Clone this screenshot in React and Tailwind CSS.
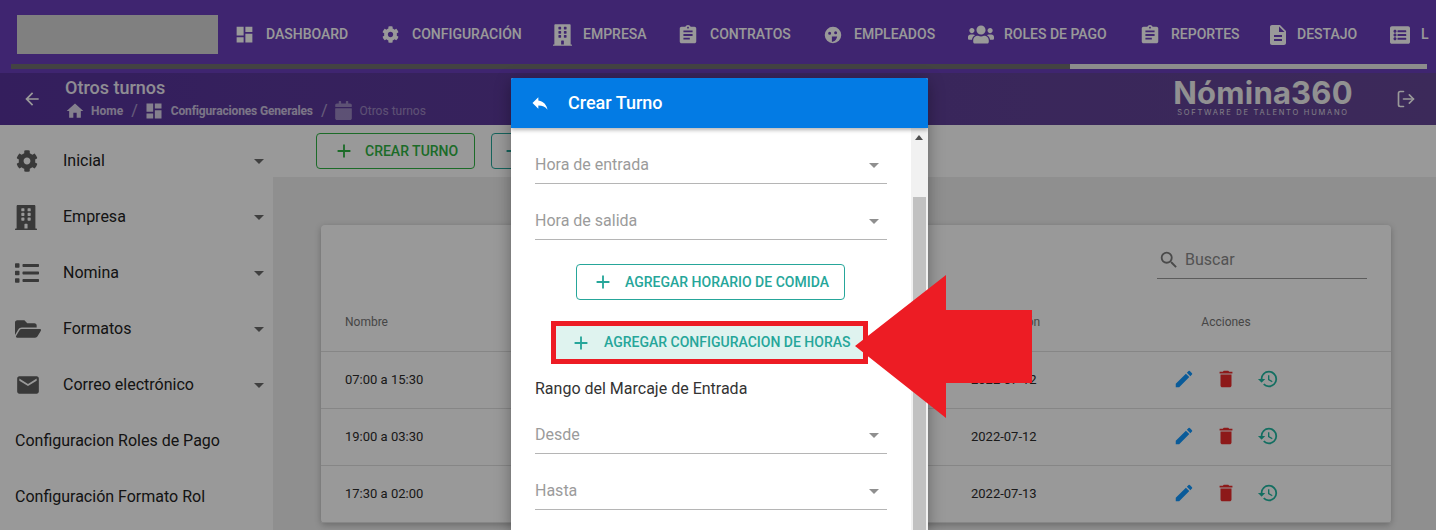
import {
  MdAdd,
  MdArrowBack,
  MdArrowDropDown,
  MdAssignment,
  MdDashboard,
  MdDelete,
  MdDescription,
  MdEdit,
  MdEmail,
  MdHistory,
  MdHome,
  MdReply,
  MdSearch,
} from "react-icons/md";
import {
  FaBuilding,
  FaCalendar,
  FaCog,
  FaFolderOpen,
  FaList,
  FaListAlt,
  FaUsers,
} from "react-icons/fa";
import { LogOut } from "lucide-react";

function FaceIcon({ className }) {
  return (
    <svg className={className} viewBox="0 0 24 24" fill="currentColor">
      <path
        fillRule="evenodd"
        d="M12 1a11 11 0 1 1 0 22a11 11 0 0 1 0-22zM7.5 7.5a2 2 0 1 0 0 4a2 2 0 0 0 0-4zM15.5 7a2 2 0 1 0 0 4a2 2 0 0 0 0-4zM10.500 14v7c3.500 0 6.500-3 7-7z"
      />
    </svg>
  );
}

const navItems = [
  { label: "DASHBOARD", icon: MdDashboard, iconClass: "w-[21px] h-[21px] ml-[1px]", itemClass: "w-[149px]", slotClass: "w-[33px]" },
  { label: "CONFIGURACIÓN", icon: FaCog, iconClass: "w-[17px] h-[17px]", itemClass: "w-[171px]", slotClass: "w-[30px]" },
  { label: "EMPRESA", icon: FaBuilding, iconClass: "w-[19px] h-[22px]", itemClass: "w-[124px]", slotClass: "w-[30px]" },
  { label: "CONTRATOS", icon: MdAssignment, iconClass: "w-[22px] h-[22px]", itemClass: "w-[147px]", slotClass: "w-[33px]" },
  { label: "EMPLEADOS", icon: FaceIcon, iconClass: "w-[18px] h-[18px]", itemClass: "w-[144px]", slotClass: "w-[30px]" },
  { label: "ROLES DE PAGO", icon: FaUsers, iconClass: "w-[26px] h-[21px]", itemClass: "w-[171px]", slotClass: "w-[36px]" },
  { label: "REPORTES", icon: MdAssignment, iconClass: "w-[22px] h-[22px]", itemClass: "w-[127px]", slotClass: "w-[32px]" },
  { label: "DESTAJO", icon: MdDescription, iconClass: "w-[24px] h-[24px]", itemClass: "w-[124px]", slotClass: "w-[31px]" },
  { label: "L", icon: FaListAlt, iconClass: "w-[20px] h-[20px]", itemClass: "w-[40px]", slotClass: "w-[31px]" },
];

const sideItems = [
  { label: "Inicial", icon: FaCog, iconClass: "w-[22px] h-[22px] ml-[1px]" },
  { label: "Empresa", icon: FaBuilding, iconClass: "w-[22px] h-[25px]" },
  { label: "Nomina", icon: FaList, iconClass: "w-[24px] h-[24px]" },
  { label: "Formatos", icon: FaFolderOpen, iconClass: "w-[26px] h-[24px]" },
  { label: "Correo electrónico", icon: MdEmail, iconClass: "w-[26px] h-[26px]" },
];

const rows = [
  { name: "07:00 a 15:30", date: "2022-07-12" },
  { name: "19:00 a 03:30", date: "2022-07-12" },
  { name: "17:30 a 02:00", date: "2022-07-13" },
];

function SelectField({ label }) {
  return (
    <div className="h-[56px] flex items-end justify-between border-b border-[#b5b5b5] pb-[6px] text-[16px] leading-[24px] text-[#9b9b9b]">
      <span>{label}</span>
      <MdArrowDropDown className="w-[24px] h-[24px] mr-[1px] text-[#8f8f8f]" />
    </div>
  );
}

function Navbar() {
  return (
    <header className="h-[73px] bg-[#693ebb] pt-[15px]">
      <div className="flex items-center h-[39px]">
        <div className="w-[201px] h-[39px] ml-[17px] mr-[15px] bg-[#d6d6d6] shrink-0" />
        <nav className="flex items-center text-white text-[14px] font-medium whitespace-nowrap">
          {navItems.map((item) => {
            const Icon = item.icon;
            return (
              <div key={item.label} className={`flex items-center shrink-0 ${item.itemClass}`}>
                <div className={`shrink-0 ${item.slotClass}`}>
                  <Icon className={item.iconClass} />
                </div>
                <span>{item.label}</span>
              </div>
            );
          })}
        </nav>
      </div>
      <div className="flex h-[5px] ml-[11px] mr-[9px] mt-[10px] bg-[#e9e9e9]">
        <div className="w-[1059px] bg-[#717171]" />
      </div>
    </header>
  );
}

function SubHeader() {
  return (
    <div className="h-[52px] flex items-center bg-gradient-to-r from-[#57339c] to-[#654696] text-white">
      <MdArrowBack className="w-[20px] h-[20px] ml-[22px] mr-[23px]" />
      <div className="flex-1">
        <div className="text-[18px] font-medium leading-[20px] opacity-90">Otros turnos</div>
        <div className="flex items-center text-[12px] font-bold mt-[3px] leading-[16px]">
          <MdHome className="w-[20px] h-[20px] mr-[6px] opacity-80" />
          <span className="opacity-70">Home</span>
          <span className="mx-[8px] font-normal opacity-50 text-[16px]">/</span>
          <MdDashboard className="w-[20px] h-[20px] mr-[7px] -ml-[2px] opacity-80" />
          <span className="tracking-[-0.15px] opacity-70">Configuraciones Generales</span>
          <span className="mx-[8px] font-normal opacity-50 text-[16px]">/</span>
          <FaCalendar className="w-[17px] h-[19px] mr-[7px] opacity-40" />
          <span className="font-normal opacity-40">Otros turnos</span>
        </div>
      </div>
      <div className="w-[178px] flex flex-col items-center mb-[4px] text-[#f2f2f2] mr-[44px] font-['Inter',sans-serif]">
        <div className="text-[31px] font-bold leading-[31px] tracking-[0.2px] whitespace-nowrap">Nómina360</div>
        <div className="text-[7.5px] leading-[9px] tracking-[1.75px] whitespace-nowrap opacity-80">SOFTWARE DE TALENTO HUMANO</div>
      </div>
      <LogOut className="w-[20px] h-[20px] mr-[20px]" strokeWidth={2} />
    </div>
  );
}

function Sidebar() {
  return (
    <aside className="w-[273px] shrink-0 pt-[8px] bg-white text-[16px] text-[#222]">
      {sideItems.map((item) => {
        const Icon = item.icon;
        return (
          <div key={item.label} className="h-[56px] flex items-center pl-[15px]">
            <div className="w-[48px] shrink-0 flex items-center text-[#5f5f5f]">
              <Icon className={item.iconClass} />
            </div>
            <span className="flex-1">{item.label}</span>
            <MdArrowDropDown className="w-[24px] h-[24px] mr-[2px] text-[#6b6b6b]" />
          </div>
        );
      })}
      <div className="h-[56px] flex items-center pl-[15px]">Configuracion Roles de Pago</div>
      <div className="h-[56px] flex items-center pl-[15px]">Configuración Formato Rol</div>
    </aside>
  );
}

function TurnosTable() {
  return (
    <div className="bg-white rounded-[4px] shadow-[0_2px_6px_rgba(0,0,0,0.25)] mx-[48px] mt-[48px]">
      <div className="h-[71px] flex justify-end pr-[24px] pt-[17px]">
        <div className="w-[210px] h-[37px] flex items-center border-b border-[#9a9a9a] pl-[1px] text-[16px] text-[#8a8a8a]">
          <MdSearch className="w-[22px] h-[22px] mr-[5px] text-[#7c7c7c]" />
          <span>Buscar</span>
        </div>
      </div>
      <div className="h-[56px] grid grid-cols-[650px_170px_170px_80px] items-center border-b border-[#e0e0e0] pb-[3px] text-[12px] text-[#757575]">
        <span className="pl-[24px]">Nombre</span>
        <span>Modificación</span>
        <span className="text-center">Acciones</span>
      </div>
      {rows.map((row) => (
        <div key={row.name} className="h-[57px] grid grid-cols-[650px_170px_170px_80px] items-center border-b border-[#e0e0e0] text-[13px] text-[#2c2c2c]">
          <span className="pl-[24px]">{row.name}</span>
          <span>{row.date}</span>
          <div className="flex items-center justify-center gap-[20px] -ml-[1px] -mt-[2px]">
            <MdEdit className="w-[22px] h-[22px] text-[#1298ff]" />
            <MdDelete className="w-[22px] h-[22px] text-[#ec2b2b]" />
            <MdHistory className="w-[22px] h-[22px] text-[#20b8a2]" />
          </div>
        </div>
      ))}
    </div>
  );
}

function ToolbarButton({ label, className }) {
  return (
    <button type="button" className={`h-[36px] flex items-center border rounded-[4px] text-[14px] font-medium whitespace-nowrap ${className}`}>
      <MdAdd className="w-[22px] h-[22px] mr-[10px]" />
      {label}
    </button>
  );
}

function CrearTurnoModal() {
  return (
    <div className="absolute left-[511px] top-[78px] w-[417px] h-[452px] bg-white rounded-t-[2px] flex flex-col overflow-hidden shadow-[0_4px_16px_rgba(0,0,0,0.35)]">
      <div className="h-[50px] shrink-0 flex items-center bg-[#037be4] text-white shadow-[0_2px_4px_rgba(0,0,0,0.3)] z-10">
        <MdReply className="w-[20px] h-[20px] ml-[19px] mr-[18px]" />
        <span className="text-[18px] font-medium pb-[2px]">Crear Turno</span>
      </div>
      <div className="flex flex-1 min-h-0">
        <div className="flex-1 px-[24px] overflow-hidden">
          <SelectField label="Hora de entrada" />
          <SelectField label="Hora de salida" />
          <button type="button" className="mt-[24px] ml-[41px] w-[269px] h-[36px] flex items-center pl-[15px] border border-[#26a69a] rounded-[4px] text-[#26a69a] text-[14px] font-medium whitespace-nowrap">
            <MdAdd className="w-[22px] h-[22px] mr-[11px]" />
            AGREGAR HORARIO DE COMIDA
          </button>
          <div className="mt-[21px] ml-[16px] w-[317px] h-[43px] border-[5px] border-[#ed1c24]">
            <button type="button" className="w-full h-full flex items-center pl-[14px] bg-[#dff3ef] text-[#26a69a] text-[14px] font-medium whitespace-nowrap">
              <MdAdd className="w-[22px] h-[22px] mr-[12px]" />
              AGREGAR CONFIGURACION DE HORAS
            </button>
          </div>
          <div className="mt-[15px] h-[20px] leading-[20px] text-[16px] text-[#333]">Rango del Marcaje de Entrada</div>
          <div className="-mt-[1px]">
            <SelectField label="Desde" />
            <SelectField label="Hasta" />
          </div>
        </div>
        <div className="w-[17px] shrink-0 bg-[#f1f1f1] flex flex-col items-start">
          <div className="w-[15px] flex justify-center pt-[7px]">
            <div className="w-0 h-0 border-x-[4px] border-x-transparent border-b-[5px] border-b-[#505050]" />
          </div>
          <div className="w-[13px] ml-[2px] mt-[57px] flex-1 bg-[#c1c1c1]" />
        </div>
      </div>
    </div>
  );
}

export default function App() {
  return (
    <div className="relative w-[1436px] h-[530px] overflow-hidden bg-white font-['Roboto',sans-serif]">
      <Navbar />
      <SubHeader />
      <div className="flex h-[405px]">
        <Sidebar />
        <main className="flex-1 flex flex-col">
          <div className="h-[52px] shrink-0 flex items-start gap-[16px] pl-[43px] pt-[8px] bg-white">
            <ToolbarButton label="CREAR TURNO" className="w-[159px] pl-[16px] border-[#2fb344] text-[#2fb344]" />
            <ToolbarButton label="" className="w-[159px] pl-[10px] border-[#26a69a] text-[#26a69a]" />
          </div>
          <div className="flex-1 bg-[#eeeeee] overflow-hidden">
            <TurnosTable />
          </div>
        </main>
      </div>

      {/* dialog backdrop */}
      <div className="absolute inset-0 bg-black/40" />
      <CrearTurnoModal />

      <svg className="absolute left-[855px] top-[275px]" width="177" height="143" viewBox="0 0 177 143">
        <polygon points="0,71 91,0 91,35 177,35 177,108 91,108 91,143" fill="#ed1c24" />
      </svg>
    </div>
  );
}
